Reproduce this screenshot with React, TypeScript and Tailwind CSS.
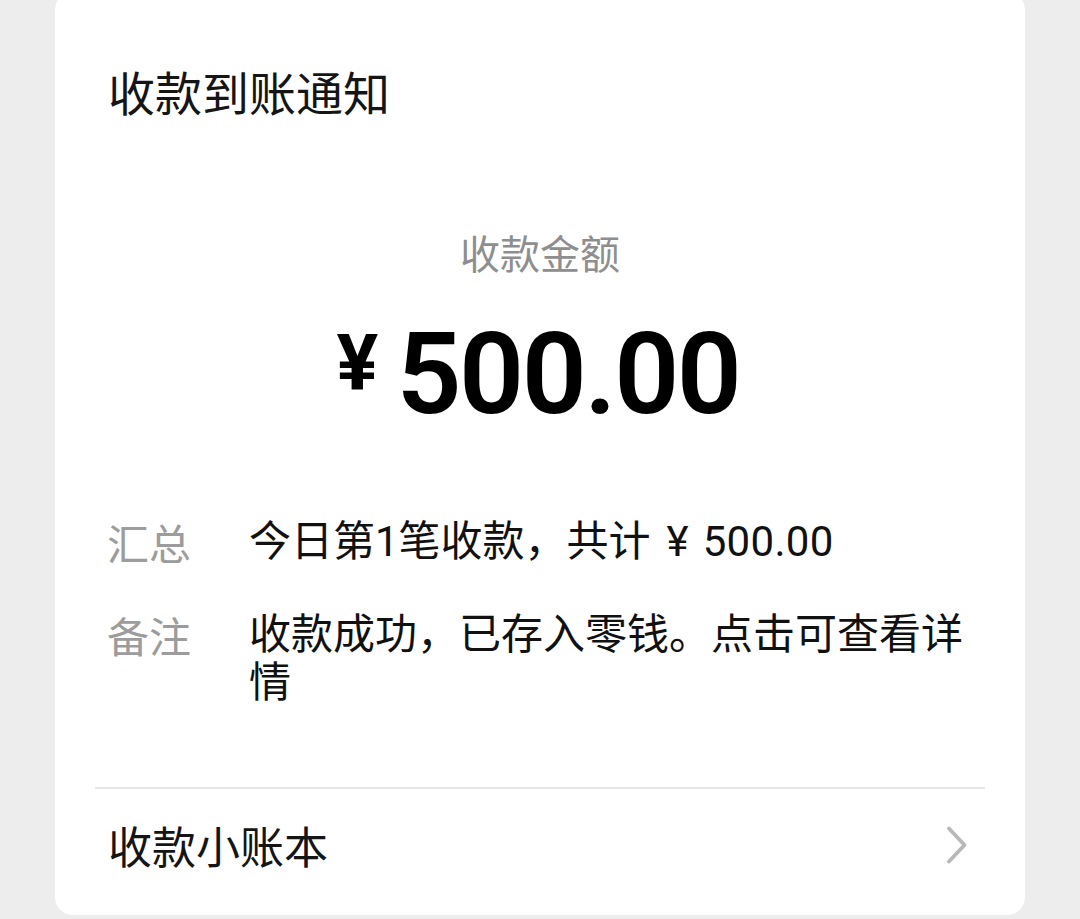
const cjk = { fontFamily: '"Noto Sans CJK SC", "Noto Sans", sans-serif' };
const num = { fontFamily: 'Roboto, "Liberation Sans", sans-serif' };
const mixed = { fontFamily: 'Roboto, "Noto Sans CJK SC", sans-serif' };

function ChevronRight() {
  return (
    <svg width="24" height="40" viewBox="0 0 24 40" fill="none" className="mr-[16px]">
      <path d="M4 3.5 L19.5 20 L4 36.5" stroke="#b8b8b8" strokeWidth="3.8" strokeLinecap="round" strokeLinejoin="round" />
    </svg>
  );
}

function InfoRow({ label, children }: { label: string; children: React.ReactNode }) {
  return (
    <div className="flex text-[42px] leading-[48px]">
      <div className="w-[142px] shrink-0 text-[#9c9c9c]">{label}</div>
      <div className="flex-1 text-[#111]" style={mixed}>
        {children}
      </div>
    </div>
  );
}

export default function App() {
  return (
    <div className="h-[919px] w-[1080px] overflow-hidden bg-[#ededed]" style={cjk}>
      <div className="mx-[55px] mt-[-8px] flex h-[923px] flex-col rounded-[18px] bg-white">
        <div className="pt-[69px] pl-[53px] text-[47px] leading-[60px] text-[#151515]">收款到账通知</div>

        <div className="mt-[107px] text-center text-[40px] leading-[48px] text-[#8e8e8e]">收款金额</div>

        <div className="mt-[38px] flex h-[120px] justify-center pr-[4px] text-black" style={num}>
          <span className="mt-[11px] mr-[18px] text-[78px] leading-none font-bold">¥</span>
          <span className="text-[114px] leading-[120px] font-semibold tracking-[-2.5px]">500.00</span>
        </div>

        <div className="mt-[84px] flex flex-col gap-[45px] pl-[52px] pr-[40px]">
          <InfoRow label="汇总">
            今日第1笔收款，共计<span className="ml-[16px] mr-[14px]">¥</span>
            <span className="tracking-[0.3px]">500.00</span>
          </InfoRow>
          <InfoRow label="备注">收款成功，已存入零钱。点击可查看详情</InfoRow>
        </div>

        <div className="mx-[40px] mt-[80px] h-[2px] bg-[#e6e6e6]" />

        <div className="flex items-center justify-between pt-[28px] pl-[53px] pr-[40px] text-[44px] leading-[56px] text-[#151515]">
          <span>收款小账本</span>
          <ChevronRight />
        </div>
      </div>
    </div>
  );
}
